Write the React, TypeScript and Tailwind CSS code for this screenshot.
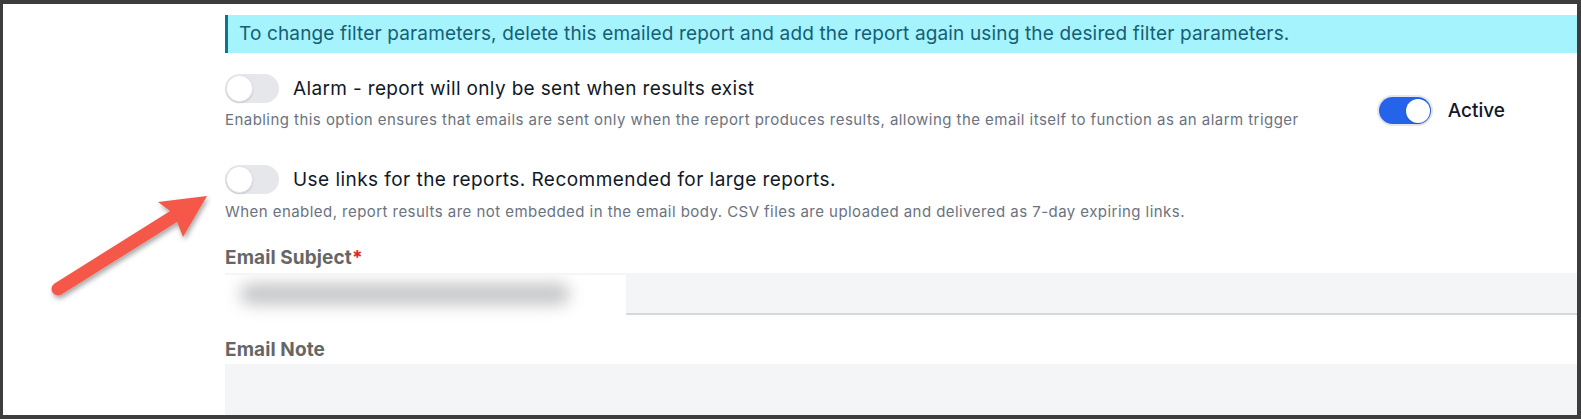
import React from "react";

function Toggle({ on = false }: { on?: boolean }) {
  if (on) {
    return (
      <div className="relative h-[27px] w-[52px] shrink-0 rounded-full bg-[#2563eb] ring-[2px] ring-[#e5e7eb]">
        <div className="absolute right-[1px] top-[1.5px] h-[24px] w-[24px] rounded-full bg-white shadow-[0_1px_2px_rgba(0,0,0,0.2)]" />
      </div>
    );
  }
  return (
    <div className="relative h-[29px] w-[54px] shrink-0 rounded-full bg-[#e5e7eb]">
      <div className="absolute left-[1px] top-[1px] h-[27px] w-[27px] rounded-full border border-[#e5e7eb] bg-white shadow-[0_1px_2px_rgba(0,0,0,0.15)]" />
    </div>
  );
}

export default function App() {
  return (
    <div
      className="relative h-[419px] w-[1581px] bg-[#3d3d3d] pb-[4px] pl-[3px] pr-[4px] pt-[4px]"
      style={{ fontFamily: "Inter, 'Noto Sans', sans-serif" }}
    >
      <div className="relative h-full w-full overflow-hidden bg-white pl-[222px]">
        {/* Alert */}
        <div className="mt-[11px] flex h-[38px] items-center border-l-[3px] border-[#0e7490] bg-[#a5f3fc] pl-[11px] text-[19px] tracking-[0.15px] text-[#155e75]">
          To change filter parameters, delete this emailed report and add the report again using the desired filter parameters.
        </div>

        {/* Row 1 */}
        <div className="mt-[21px] flex">
          <div className="flex-1">
            <div className="flex h-[29px] items-center gap-[14px]">
              <Toggle />
              <span className="text-[19px] leading-[24px] tracking-[0.35px] text-[#111827]">
                Alarm - report will only be sent when results exist
              </span>
            </div>
            <div className="mt-[7px] text-[15px] leading-[20px] tracking-[0.45px] text-[#6b7280]">
              Enabling this option ensures that emails are sent only when the report produces results, allowing the email itself to function as an alarm trigger
            </div>
          </div>
          <div className="mt-[23px] flex h-[27px] items-center gap-[17px] pr-[72px]">
            <Toggle on />
            <span className="text-[19px] font-medium leading-[24px] text-[#111827]">Active</span>
          </div>
        </div>

        {/* Row 2 */}
        <div className="mt-[35px]">
          <div className="flex h-[29px] items-center gap-[14px]">
            <Toggle />
            <span className="text-[19px] leading-[24px] tracking-[0.45px] text-[#111827]">
              Use links for the reports. Recommended for large reports.
            </span>
          </div>
          <div className="mt-[8px] text-[15px] leading-[20px] tracking-[0.45px] text-[#6b7280]">
            When enabled, report results are not embedded in the email body. CSV files are uploaded and delivered as 7-day expiring links.
          </div>
        </div>

        {/* Email Subject */}
        <div className="mt-[24px] text-[19px] font-bold leading-[24px] tracking-[0.1px] text-[#666666]">
          Email Subject<span className="text-[#dc2626]">*</span>
        </div>
        <div className="relative mt-[3px] h-[42px] border-b-2 border-[#d4d9df] bg-[#f4f5f7]">
          <div className="absolute left-0 top-[2px] h-[47px] w-[401px] overflow-hidden bg-white">
            <div className="absolute left-[15px] top-[8px] h-[22px] w-[330px] rounded-full bg-[#c6c7c9] blur-[8px]" />
          </div>
        </div>

        {/* Email Note */}
        <div className="mt-[23px] text-[19px] font-bold leading-[24px] tracking-[0.1px] text-[#666666]">Email Note</div>
        <div className="mt-[2px] h-[80px] bg-[#f4f5f7]" />
      </div>

      {/* Annotation arrow */}
      <svg
        className="pointer-events-none absolute left-0 top-0"
        width="1581"
        height="419"
        viewBox="0 0 1581 419"
      >
        <defs>
          <filter id="sh" x="-20%" y="-20%" width="140%" height="140%">
            <feDropShadow dx="1.5" dy="3" stdDeviation="2.5" floodColor="#000" floodOpacity="0.35" />
          </filter>
        </defs>
        <g filter="url(#sh)">
          <line x1="58" y1="289" x2="176" y2="215" stroke="#f5584a" strokeWidth="13" strokeLinecap="round" />
          <polygon points="207,196 158,202 174,214 183,237" fill="#f5584a" />
        </g>
      </svg>
    </div>
  );
}
